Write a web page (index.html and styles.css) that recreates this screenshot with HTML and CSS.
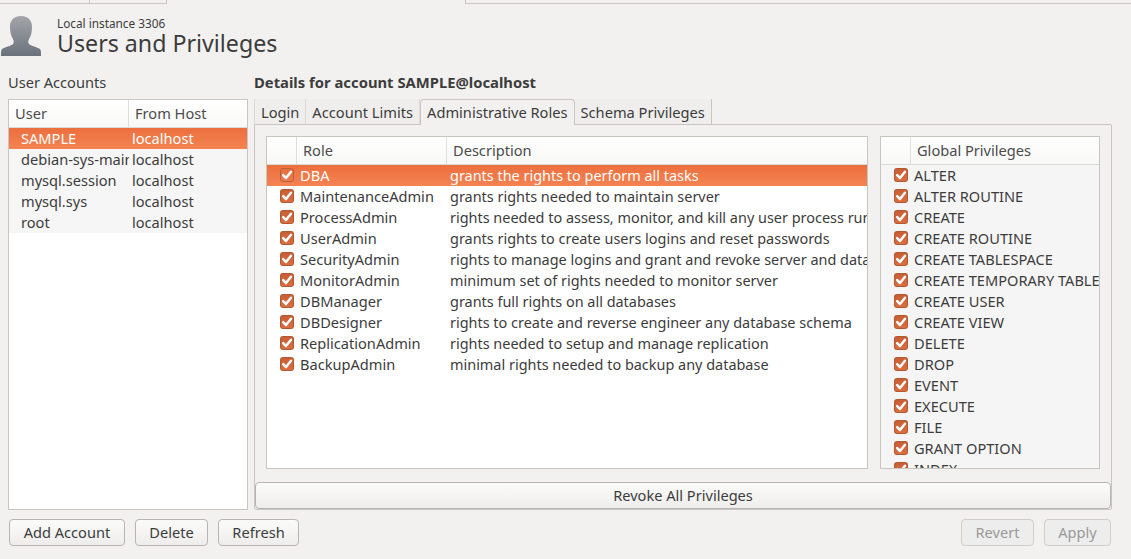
FILE: index.html
```html
<!DOCTYPE html>
<html lang="en">
<head>
    <meta charset="UTF-8">
    <title>Users and Privileges</title>
    <link rel="stylesheet" href="styles.css">
</head>
<body>
    <div class="top-tabs">
        <div class="top-tab first"></div>
        <div class="top-tab second"></div>
        <div class="top-gap"></div>
        <div class="top-rest"></div>
    </div>

    <header class="page-head">
        <svg class="avatar" width="42" height="41" viewBox="0 0 42 41">
            <defs>
                <linearGradient id="avatarFill" x1="0" y1="0" x2="0" y2="1">
                    <stop offset="0" stop-color="#a3a5a9"/>
                    <stop offset="1" stop-color="#6b727c"/>
                </linearGradient>
            </defs>
            <path fill="url(#avatarFill)" d="M21 0C13 0 10 5 10 11c0 5 1 9 3 12 1 2 1 4 0 5-2 2-8 3-11 5-1 1-1 4-1 7h40c0-3 0-6-1-7-3-2-9-3-11-5-1-1-1-3 0-5 2-3 3-7 3-12C32 5 29 0 21 0z"/>
        </svg>
        <div class="head-text">
            <div class="instance">Local instance 3306</div>
            <h1>Users and Privileges</h1>
        </div>
    </header>

    <main class="content">
        <section class="accounts">
            <div class="section-title">User Accounts</div>
            <div class="list-box">
                <div class="list-head">
                    <div class="col-user">User</div>
                    <div class="col-host">From Host</div>
                </div>
                <div class="account-row selected"><span class="cell-user">SAMPLE</span><span>localhost</span></div>
                <div class="account-row"><span class="cell-user">debian-sys-maint</span><span>localhost</span></div>
                <div class="account-row"><span class="cell-user">mysql.session</span><span>localhost</span></div>
                <div class="account-row"><span class="cell-user">mysql.sys</span><span>localhost</span></div>
                <div class="account-row"><span class="cell-user">root</span><span>localhost</span></div>
            </div>
        </section>

        <section class="details">
            <div class="details-title">Details for account SAMPLE@localhost</div>
            <div class="tabs">
                <div class="tab">Login</div>
                <div class="tab">Account Limits</div>
                <div class="tab active">Administrative Roles</div>
                <div class="tab">Schema Privileges</div>
            </div>
            <div class="tab-panel">
                <div class="panel-lists">
                    <div class="roles-box">
                        <div class="list-head">
                            <div class="col-check"></div>
                            <div class="col-role">Role</div>
                            <div class="col-desc">Description</div>
                        </div>
                        <div class="role-row selected"><span class="check"></span><span class="cell-role">DBA</span><span class="cell-desc">grants the rights to perform all tasks</span></div>
                        <div class="role-row"><span class="check"></span><span class="cell-role">MaintenanceAdmin</span><span class="cell-desc">grants rights needed to maintain server</span></div>
                        <div class="role-row"><span class="check"></span><span class="cell-role">ProcessAdmin</span><span class="cell-desc">rights needed to assess, monitor, and kill any user process running in server</span></div>
                        <div class="role-row"><span class="check"></span><span class="cell-role">UserAdmin</span><span class="cell-desc">grants rights to create users logins and reset passwords</span></div>
                        <div class="role-row"><span class="check"></span><span class="cell-role">SecurityAdmin</span><span class="cell-desc">rights to manage logins and grant and revoke server and database privileges</span></div>
                        <div class="role-row"><span class="check"></span><span class="cell-role">MonitorAdmin</span><span class="cell-desc">minimum set of rights needed to monitor server</span></div>
                        <div class="role-row"><span class="check"></span><span class="cell-role">DBManager</span><span class="cell-desc">grants full rights on all databases</span></div>
                        <div class="role-row"><span class="check"></span><span class="cell-role">DBDesigner</span><span class="cell-desc">rights to create and reverse engineer any database schema</span></div>
                        <div class="role-row"><span class="check"></span><span class="cell-role">ReplicationAdmin</span><span class="cell-desc">rights needed to setup and manage replication</span></div>
                        <div class="role-row"><span class="check"></span><span class="cell-role">BackupAdmin</span><span class="cell-desc">minimal rights needed to backup any database</span></div>
                    </div>
                    <div class="privs-box">
                        <div class="list-head">
                            <div class="col-check"></div>
                            <div class="col-priv">Global Privileges</div>
                        </div>
                        <div class="priv-row"><span class="check"></span><span>ALTER</span></div>
                        <div class="priv-row"><span class="check"></span><span>ALTER ROUTINE</span></div>
                        <div class="priv-row"><span class="check"></span><span>CREATE</span></div>
                        <div class="priv-row"><span class="check"></span><span>CREATE ROUTINE</span></div>
                        <div class="priv-row"><span class="check"></span><span>CREATE TABLESPACE</span></div>
                        <div class="priv-row"><span class="check"></span><span>CREATE TEMPORARY TABLES</span></div>
                        <div class="priv-row"><span class="check"></span><span>CREATE USER</span></div>
                        <div class="priv-row"><span class="check"></span><span>CREATE VIEW</span></div>
                        <div class="priv-row"><span class="check"></span><span>DELETE</span></div>
                        <div class="priv-row"><span class="check"></span><span>DROP</span></div>
                        <div class="priv-row"><span class="check"></span><span>EVENT</span></div>
                        <div class="priv-row"><span class="check"></span><span>EXECUTE</span></div>
                        <div class="priv-row"><span class="check"></span><span>FILE</span></div>
                        <div class="priv-row"><span class="check"></span><span>GRANT OPTION</span></div>
                        <div class="priv-row"><span class="check"></span><span>INDEX</span></div>
                    </div>
                </div>
                <button class="btn revoke" type="button">Revoke All Privileges</button>
            </div>
        </section>
    </main>

    <footer class="actions">
        <button class="btn add" type="button">Add Account</button>
        <button class="btn delete" type="button">Delete</button>
        <button class="btn refresh" type="button">Refresh</button>
        <div class="spacer"></div>
        <button class="btn revert" type="button" disabled>Revert</button>
        <button class="btn apply" type="button" disabled>Apply</button>
    </footer>
</body>
</html>
```

FILE: styles.css
```css
* {
    box-sizing: border-box;
}
html, body {
    margin: 0;
    height: 559px;
    overflow: hidden;
}
body {
    font-family: "Noto Sans", "Open Sans", sans-serif;
    font-size: 14.6px;
    color: #3c3c3c;
    background-color: #f2f1f0;
    display: flex;
    flex-direction: column;
}

/* top tab strip, mostly cut off */
.top-tabs {
    display: flex;
    height: 4px;
    flex: none;
}
.top-tab {
    height: 4px;
    border-right: 1px solid #c9c6c2;
    border-bottom: 1px solid #c9c6c2;
}
.top-tab.first {
    width: 90px;
}
.top-tab.second {
    width: 77px;
}
.top-gap {
    width: 298px;
}
.top-rest {
    flex: 1;
    border-left: 1px solid #c9c6c2;
    border-bottom: 1px solid #c9c6c2;
}

.page-head {
    display: flex;
    flex: none;
    height: 60px;
    padding: 12px 0 0 0;
}
.avatar {
    display: block;
    flex: none;
}
.head-text {
    margin-left: 15px;
}
.instance {
    font-size: 11.8px;
    line-height: 14px;
}
h1 {
    margin: 0;
    font-size: 23.2px;
    font-weight: normal;
    line-height: 26px;
}

.content {
    display: flex;
    flex: none;
    height: 446px;
    padding: 0 19px 0 8px;
}
.accounts {
    width: 240px;
    flex: none;
    display: flex;
    flex-direction: column;
}
.section-title {
    height: 35px;
    line-height: 36px;
}
.list-box {
    flex: 1;
    background: white;
    border: 1px solid #c9c6c2;
}
.list-head {
    display: flex;
    height: 28px;
    line-height: 27px;
    background: linear-gradient(#ffffff, #f8f8f7);
    border-bottom: 1px solid #dcdad7;
    color: #4c4c4c;
}
.list-head > div {
    border-right: 1px solid #e0dedb;
    padding-left: 6px;
}
.list-head > div:last-child {
    border-right: none;
}
.col-user {
    width: 120px;
}
.col-host {
    flex: 1;
}
.account-row {
    display: flex;
    height: 21px;
    line-height: 21px;
    background: #f6f6f6;
}
.account-row.selected,
.role-row.selected {
    color: white;
    background: linear-gradient(#ec6f3e, #f58352);
}
.cell-user {
    width: 120px;
    margin-right: 3px;
    padding-left: 12px;
    white-space: nowrap;
    overflow: hidden;
}

.details {
    flex: 1;
    min-width: 0;
    margin-left: 6px;
    display: flex;
    flex-direction: column;
}
.details-title {
    height: 35px;
    line-height: 36px;
    font-size: 14.8px;
    font-weight: bold;
}
.tabs {
    display: flex;
    height: 26px;
    position: relative;
    z-index: 1;
}
.tab {
    padding: 0 6px;
    font-size: 14.65px;
    line-height: 26px;
    border-right: 1px solid #dcdad7;
    border-bottom: 1px solid #c9c6c2;
    background: #efeeed;
}
.tab:first-child {
    border-left: 1px solid #dcdad7;
}
.tab.active {
    padding: 0 6px;
    background: #f2f1f0;
    border: 1px solid #c9c6c2;
    border-bottom: none;
    border-radius: 4px 4px 0 0;
    line-height: 25px;
}
.tab:last-child {
    border-right: 1px solid #c9c6c2;
}
.tab-panel {
    height: 386px;
    margin-top: -1px;
    border: 1px solid #c9c6c2;
    border-radius: 0 2px 2px 2px;
    padding: 11px 0 0 0;
    display: flex;
    flex-direction: column;
}
.panel-lists {
    display: flex;
    height: 333px;
    flex: none;
    padding-left: 11px;
}
.roles-box {
    width: 602px;
    background: white;
    border: 1px solid #c9c6c2;
    overflow: hidden;
}
.roles-box .col-check,
.privs-box .col-check {
    width: 30px;
}
.col-role {
    width: 150px;
}
.col-desc {
    flex: 1;
}
.col-priv {
    flex: 1;
}
.role-row,
.priv-row {
    display: flex;
    align-items: center;
    height: 21px;
    padding-bottom: 1px;
    white-space: nowrap;
}
.cell-desc {
    font-size: 14.45px;
}
.check {
    flex: none;
    width: 14px;
    height: 14px;
    margin: 0 6px 0 13px;
    border-radius: 3px;
    background-color: #d0653a;
    background-image:
        url("data:image/svg+xml,%3Csvg xmlns='http://www.w3.org/2000/svg' viewBox='0 0 14 14'%3E%3Cpath d='M3.2 7.2l2.8 2.8 5-6.2' fill='none' stroke='white' stroke-width='2.5' stroke-linecap='round' stroke-linejoin='round'/%3E%3C/svg%3E"),
        linear-gradient(#c65d35, #dc6f42);
    box-shadow: inset 0 0 0 1px #b4592f;
}
.role-row.selected .check {
    background-image:
        url("data:image/svg+xml,%3Csvg xmlns='http://www.w3.org/2000/svg' viewBox='0 0 14 14'%3E%3Cpath d='M3.2 7.2l2.8 2.8 5-6.2' fill='none' stroke='white' stroke-width='2.5' stroke-linecap='round' stroke-linejoin='round'/%3E%3C/svg%3E"),
        linear-gradient(#e56f41, #ee7b4b);
    box-shadow: inset 0 0 0 1px #b4623c;
}
.cell-role {
    width: 150px;
    flex: none;
}
.privs-box {
    width: 220px;
    margin-left: 12px;
    background: #f6f5f5;
    border: 1px solid #c9c6c2;
    overflow: hidden;
}
.priv-row {
    overflow: hidden;
}
.btn {
    font-family: inherit;
    font-size: 14.6px;
    color: #3c3c3c;
    background: linear-gradient(#fbfbfa, #eeedec);
    border: 1px solid #b8b5b1;
    border-radius: 4px;
    padding: 0 0 2px 0;
}
.btn:disabled {
    color: #9c9a98;
    background: #eeeded;
    border-color: #d0cdca;
}
.revoke {
    height: 27px;
    flex: none;
    margin: 13px 0 0 0;
}

.actions {
    display: flex;
    flex: none;
    gap: 10px;
    padding: 9px 20px 0 9px;
}
.actions .btn {
    height: 27px;
}
.add {
    width: 116px;
}
.delete {
    width: 73px;
}
.refresh {
    width: 81px;
}
.spacer {
    flex: 1;
}
.revert {
    width: 73px;
}
.apply {
    width: 67px;
}
```
